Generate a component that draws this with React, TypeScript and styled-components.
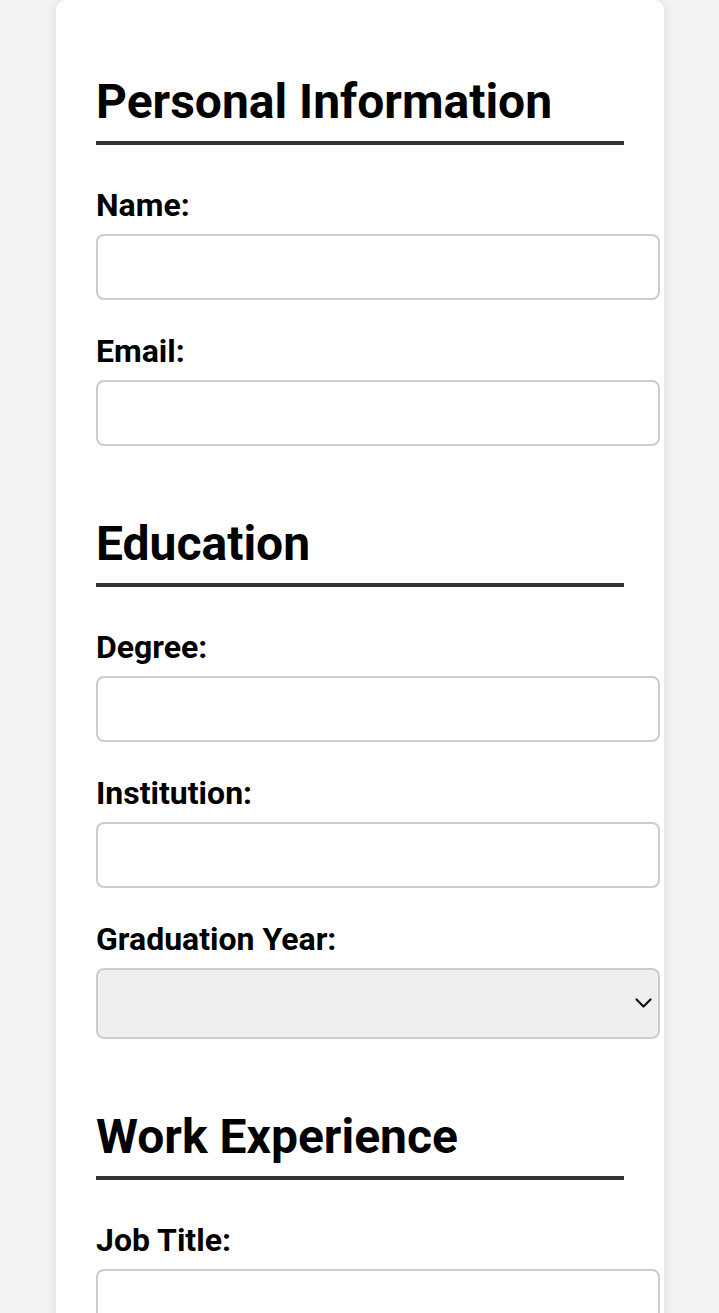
import React from "react";
import styled, { createGlobalStyle } from "styled-components";

const GlobalStyle = createGlobalStyle`
  html, body {
    margin: 0;
    padding: 0;
    background: #f3f3f3;
    font-family: Roboto, "Liberation Sans", sans-serif;
  }
  * { box-sizing: border-box; }
`;

const Page = styled.div`
  display: flex;
  justify-content: center;
  padding-left: 56px;
  padding-right: 55px;
`;

const Card = styled.form`
  width: 608px;
  background: #ffffff;
  border-radius: 10px 10px 0 0;
  box-shadow: 0 0 12px rgba(0, 0, 0, 0.1);
  padding: 74px 40px 0 40px;
  display: flex;
  flex-direction: column;
`;

const Section = styled.section<{ $first?: boolean }>`
  display: flex;
  flex-direction: column;
  margin-top: ${(p) => (p.$first ? "0" : "70px")};
`;

const Heading = styled.h2`
  margin: 0 0 42px 0;
  font-size: 48px;
  line-height: 55px;
  font-weight: 700;
  color: #000;
  padding-bottom: 12px;
  border-bottom: 4px solid #333;
`;

const Field = styled.div`
  display: flex;
  flex-direction: column;
  & + & {
    margin-top: 33px;
  }
`;

const Label = styled.label`
  display: block;
  font-size: 32px;
  line-height: 37px;
  font-weight: 700;
  color: #000;
  margin-bottom: 10px;
`;

const Input = styled.input`
  width: 564px;
  height: 66px;
  border: 2px solid #cccccc;
  border-radius: 8px;
  background: #fff;
  font-size: 28px;
  padding: 0 16px;
  font-family: inherit;
  outline: none;
`;

const SelectWrap = styled.div`
  position: relative;
  width: 564px;
  height: 71px;
`;

const Select = styled.select`
  appearance: none;
  -webkit-appearance: none;
  width: 100%;
  height: 100%;
  border: 2px solid #cccccc;
  border-radius: 8px;
  background: #efefef;
  font-size: 28px;
  padding: 0 16px;
  font-family: inherit;
  color: #000;
  outline: none;
`;

const Chevron = styled.svg`
  position: absolute;
  right: 8px;
  top: 30px;
  width: 17px;
  height: 11px;
  pointer-events: none;
`;

const years = ["", "2020", "2021", "2022", "2023", "2024", "2025"];

export default function App() {
  return (
    <>
      <GlobalStyle />
      <Page>
        <Card onSubmit={(e) => e.preventDefault()}>
          <Section $first>
            <Heading>Personal Information</Heading>
            <Field>
              <Label htmlFor="name">Name:</Label>
              <Input id="name" type="text" />
            </Field>
            <Field>
              <Label htmlFor="email">Email:</Label>
              <Input id="email" type="email" />
            </Field>
          </Section>
          <Section>
            <Heading>Education</Heading>
            <Field>
              <Label htmlFor="degree">Degree:</Label>
              <Input id="degree" type="text" />
            </Field>
            <Field>
              <Label htmlFor="institution">Institution:</Label>
              <Input id="institution" type="text" />
            </Field>
            <Field>
              <Label htmlFor="year">Graduation Year:</Label>
              <SelectWrap>
                <Select id="year" defaultValue="">
                  {years.map((y) => (
                    <option key={y} value={y}>
                      {y}
                    </option>
                  ))}
                </Select>
                <Chevron viewBox="0 0 17 11" fill="none">
                  <path d="M1.5 1.5 L8.5 8.5 L15.5 1.5" stroke="#111" strokeWidth="2.2" strokeLinecap="round" strokeLinejoin="round" />
                </Chevron>
              </SelectWrap>
            </Field>
          </Section>
          <Section>
            <Heading>Work Experience</Heading>
            <Field>
              <Label htmlFor="job">Job Title:</Label>
              <Input id="job" type="text" />
            </Field>
            <Field>
              <Label htmlFor="company">Company:</Label>
              <Input id="company" type="text" />
            </Field>
          </Section>
        </Card>
      </Page>
    </>
  );
}
